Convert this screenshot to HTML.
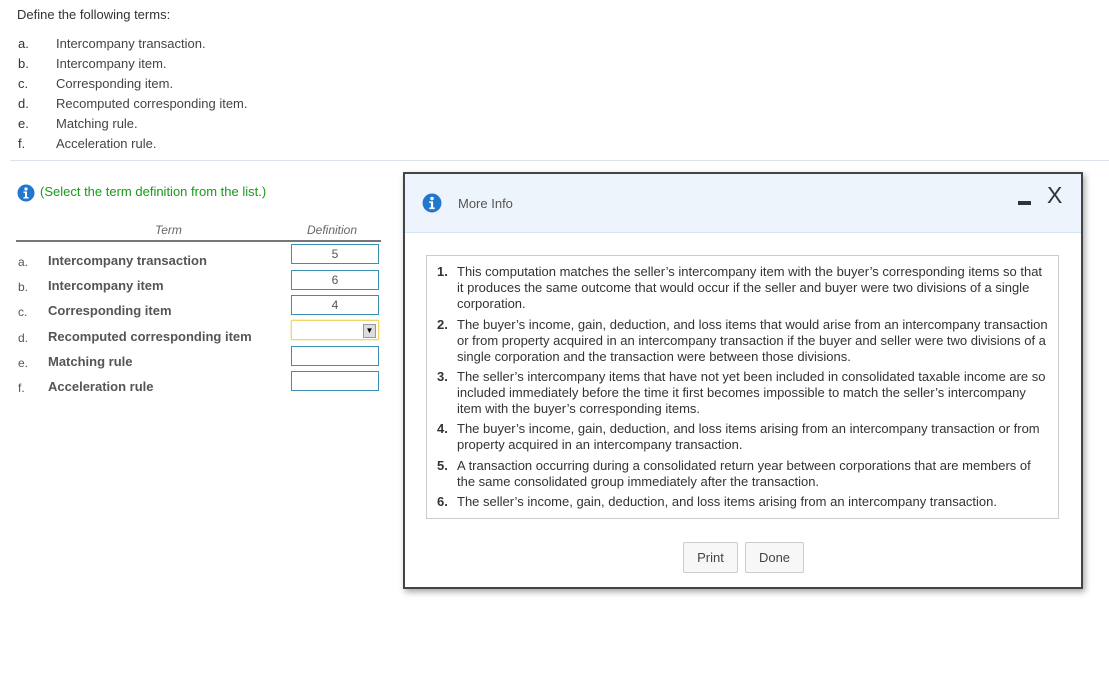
<!DOCTYPE html>
<html><head><meta charset="utf-8"><style>
body{margin:0;width:1109px;height:673px;background:#fff;font-family:"Liberation Sans",Arial,sans-serif;color:#333;position:relative;overflow:hidden}
.a{position:absolute;white-space:nowrap}
.s12{font-size:13px}
.t{font-size:13px;color:#555;font-weight:bold}
.box{position:absolute;left:291px;width:86px;height:18px;border:1px solid #3b8fb5;font-size:12px;color:#555;text-align:center;line-height:18px}
.modal{position:absolute;left:403px;top:172px;width:676px;height:413px;border:2px solid #444;background:#fff;box-shadow:2px 3px 6px rgba(0,0,0,.35)}
.hdr{position:absolute;left:0;top:0;width:676px;height:58px;background:#eef4fb;border-bottom:1px solid #d7e6f2}
.inner{position:absolute;left:21px;top:81px;width:631px;height:262px;border:1px solid #ccc}
.li{position:absolute;left:10px;font-size:13px;line-height:16px;color:#333;white-space:nowrap}
.li b{display:inline-block;width:20px}
.li span{display:inline-block;vertical-align:top}
.btn{position:absolute;top:368px;height:29px;border:1px solid #ccc;border-radius:2px;background:#f7f7f7;font-size:13px;color:#444;text-align:center;line-height:29px}
</style></head><body>
<div class="a s12" style="left:17px;top:7px">Define the following terms:</div>
<div class="a s12" style="left:18px;top:34px;line-height:20px">a.<br>b.<br>c.<br>d.<br>e.<br>f.</div>
<div class="a s12" style="left:56px;top:34px;line-height:20px;color:#444">Intercompany transaction.<br>Intercompany item.<br>Corresponding item.<br>Recomputed corresponding item.<br>Matching rule.<br>Acceleration rule.</div>
<div class="a" style="left:10px;top:160px;width:1099px;height:1px;background:#dde3ea"></div>

<svg class="a" style="left:17px;top:184px" width="18" height="18" viewBox="0 0 18 18"><circle cx="9" cy="9" r="8.5" fill="#1f77d0"/><circle cx="9" cy="5" r="1.6" fill="#fff"/><path d="M6.5 7.5h3.5v5.5h1.5v1.5h-5v-1.5h1.5v-4h-1.5z" fill="#fff"/></svg>
<div class="a s12" style="left:40px;top:184px;color:#1a9a1a">(Select the term definition from the list.)</div>
<div class="a" style="left:155px;top:223px;color:#666;font-style:italic;font-size:12px">Term</div>
<div class="a" style="left:307px;top:223px;color:#666;font-style:italic;font-size:12px">Definition</div>
<div class="a" style="left:16px;top:240px;width:365px;height:2px;background:#777"></div>
<div class="a" style="left:18px;top:250px;line-height:25.2px;color:#555;font-size:12px">a.<br>b.<br>c.<br>d.<br>e.<br>f.</div>
<div class="a t" style="left:48px;top:248px;line-height:25.2px">Intercompany transaction<br>Intercompany item<br>Corresponding item<br>Recomputed corresponding item<br>Matching rule<br>Acceleration rule</div>
<div class="box" style="top:244px">5</div>
<div class="box" style="top:270px">6</div>
<div class="box" style="top:295px">4</div>
<div class="box" style="top:320px;border:1px solid #f3d66a;box-shadow:0 0 2px #f3d66a"><div style="position:absolute;right:2px;top:3px;width:11px;height:12px;background:#ddd;border:1px solid #999;font-size:8px;line-height:12px;color:#000">▼</div></div>
<div class="box" style="top:346px"></div>
<div class="box" style="top:371px"></div>

<div class="modal">
<div class="hdr"></div>
<svg class="a" style="left:17px;top:19px" width="20" height="20" viewBox="0 0 18 18"><circle cx="9" cy="9" r="8.5" fill="#1f77d0"/><circle cx="9" cy="5" r="1.6" fill="#fff"/><path d="M6.5 7.5h3.5v5.5h1.5v1.5h-5v-1.5h1.5v-4h-1.5z" fill="#fff"/></svg>
<div class="a" style="left:53px;top:22px;font-size:13px;color:#555">More Info</div>
<div class="a" style="left:613px;top:27px;width:13px;height:4px;background:#333"></div>
<div class="a" style="left:642px;top:8px;font-size:23px;color:#333">X</div>
<div class="inner">
<div class="li" style="top:8px"><b>1.</b><span>This computation matches the seller’s intercompany item with the buyer’s corresponding items so that<br>it produces the same outcome that would occur if the seller and buyer were two divisions of a single<br>corporation.</span></div>
<div class="li" style="top:61px"><b>2.</b><span>The buyer’s income, gain, deduction, and loss items that would arise from an intercompany transaction<br>or from property acquired in an intercompany transaction if the buyer and seller were two divisions of a<br>single corporation and the transaction were between those divisions.</span></div>
<div class="li" style="top:113px"><b>3.</b><span>The seller’s intercompany items that have not yet been included in consolidated taxable income are so<br>included immediately before the time it first becomes impossible to match the seller’s intercompany<br>item with the buyer’s corresponding items.</span></div>
<div class="li" style="top:165px"><b>4.</b><span>The buyer’s income, gain, deduction, and loss items arising from an intercompany transaction or from<br>property acquired in an intercompany transaction.</span></div>
<div class="li" style="top:202px"><b>5.</b><span>A transaction occurring during a consolidated return year between corporations that are members of<br>the same consolidated group immediately after the transaction.</span></div>
<div class="li" style="top:238px"><b>6.</b><span>The seller’s income, gain, deduction, and loss items arising from an intercompany transaction.</span></div>
</div>
<div class="btn" style="left:278px;width:53px">Print</div>
<div class="btn" style="left:340px;width:57px">Done</div>
</div>
</body></html>
